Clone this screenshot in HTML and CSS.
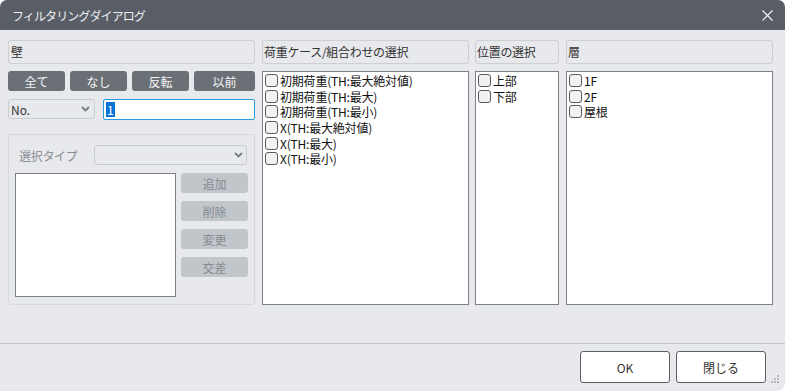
FILE: index.html
```html
<!DOCTYPE html>
<html lang="ja">
<head>
<meta charset="utf-8">
<title>フィルタリングダイアログ</title>
<link rel="stylesheet" href="styles.css">
</head>
<body>
<div class="dialog">
  <div class="titlebar">
    <span class="title">フィルタリングダイアログ</span>
    <svg class="close" width="11" height="11" viewBox="0 0 11 11"><path d="M0.5 0.5L10.5 10.5M10.5 0.5L0.5 10.5" stroke="#f2f2f2" stroke-width="1.1" fill="none"/></svg>
  </div>
  <div class="content">
    <div class="col col-wall">
      <div class="colhead">壁</div>
      <div class="btnrow">
        <button class="dbtn">全て</button>
        <button class="dbtn">なし</button>
        <button class="dbtn">反転</button>
        <button class="dbtn">以前</button>
      </div>
      <div class="inputrow">
        <div class="select sel-no"><span>No.</span><svg class="chev" width="9" height="6" viewBox="0 0 9 6"><path d="M1 1L4.5 4.5L8 1" stroke="#7a7d82" stroke-width="1.8" fill="none"/></svg></div>
        <div class="textinput"><span class="selected">1</span></div>
      </div>
      <div class="group">
        <div class="typerow">
          <span class="typelabel">選択タイプ</span>
          <div class="select sel-type"><svg class="chev" width="9" height="6" viewBox="0 0 9 6"><path d="M1 1L4.5 4.5L8 1" stroke="#7a7d82" stroke-width="1.8" fill="none"/></svg></div>
        </div>
        <div class="typebody">
          <div class="listbox small"></div>
          <div class="sidebtns">
            <button class="gbtn">追加</button>
            <button class="gbtn">削除</button>
            <button class="gbtn">変更</button>
            <button class="gbtn">交差</button>
          </div>
        </div>
      </div>
    </div>
    <div class="col col-case">
      <div class="colhead">荷重ケース/組合わせの選択</div>
      <div class="listbox">
        <label class="item"><span class="cb"></span>初期荷重(TH:最大絶対値)</label>
        <label class="item"><span class="cb"></span>初期荷重(TH:最大)</label>
        <label class="item"><span class="cb"></span>初期荷重(TH:最小)</label>
        <label class="item"><span class="cb"></span>X(TH:最大絶対値)</label>
        <label class="item"><span class="cb"></span>X(TH:最大)</label>
        <label class="item"><span class="cb"></span>X(TH:最小)</label>
      </div>
    </div>
    <div class="col col-pos">
      <div class="colhead">位置の選択</div>
      <div class="listbox">
        <label class="item"><span class="cb"></span>上部</label>
        <label class="item"><span class="cb"></span>下部</label>
      </div>
    </div>
    <div class="col col-floor">
      <div class="colhead">層</div>
      <div class="listbox">
        <label class="item"><span class="cb"></span>1F</label>
        <label class="item"><span class="cb"></span>2F</label>
        <label class="item"><span class="cb"></span>屋根</label>
      </div>
    </div>
  </div>
  <div class="footer">
    <button class="fbtn">OK</button>
    <button class="fbtn">閉じる</button>
    <svg class="grip" width="8" height="8" viewBox="0 0 8 8"><g fill="#b4b6ba"><rect x="6" y="0" width="2" height="2"/><rect x="3" y="3" width="2" height="2"/><rect x="6" y="3" width="2" height="2"/><rect x="0" y="6" width="2" height="2"/><rect x="3" y="6" width="2" height="2"/><rect x="6" y="6" width="2" height="2"/></g></svg>
  </div>
</div>
</body>
</html>
```
FILE: styles.css
```css
* { box-sizing: border-box; }
html, body { margin: 0; padding: 0; background: #ffffff; }
body {
  font-family: "Noto Sans CJK JP", "Noto Sans", sans-serif;
  font-size: 12px;
  color: #222;
}
.dialog {
  width: 785px;
  height: 391px;
  background: #e8e9ed;
  border-radius: 7px 7px 8px 0;
  overflow: hidden;
  display: flex;
  flex-direction: column;
}
.titlebar {
  height: 30px;
  flex: none;
  background: #595e66;
  display: flex;
  align-items: center;
  justify-content: space-between;
  padding: 0 12px 0 12px;
}
.title {
  color: #eceef0;
  font-size: 12px;
  letter-spacing: -0.9px;
}
.close { display: block; margin-right: 0; margin-top: 1px; }
.content {
  height: 313px;
  flex: none;
  display: flex;
  padding: 10px 12px 0 8px;
  align-items: flex-start;
}
.col { display: flex; flex-direction: column; }
.col-wall { width: 247px; margin-right: 7px; }
.col-case { width: 207px; margin-right: 6px; }
.col-pos { width: 84px; margin-right: 7px; }
.col-floor { width: 207px; }
.colhead {
  height: 24px;
  border: 1px solid #cdcfd3;
  border-radius: 3px;
  line-height: 21px;
  padding-left: 1px;
  color: #333;
  font-size: 12px;
  white-space: nowrap;
  letter-spacing: -0.3px;
}
.col-wall .colhead { padding-left: 2px; }
.listbox {
  margin-top: 7px;
  height: 234px;
  background: #fff;
  border: 1px solid #7d8085;
  padding: 1px 0 0 2px;
  display: flex;
  flex-direction: column;
}
.listbox.small {
  margin-top: 0;
  width: 161px;
  height: 124px;
}
.item {
  display: flex;
  align-items: center;
  height: 15.6px;
  line-height: 15px;
  flex: none;
  overflow: visible;
  color: #111;
  font-size: 12px;
  white-space: nowrap;
  letter-spacing: -0.2px;
}
.cb {
  width: 13px;
  height: 13px;
  border: 1px solid #555a60;
  border-radius: 3px;
  background: #f1f1f1;
  margin-right: 2px;
  flex: none;
}
.btnrow {
  margin-top: 7px;
  display: grid;
  grid-template-columns: 57px 57px 57px 61px;
  column-gap: 5px;
}
button {
  font-family: inherit;
  font-size: 12px;
  padding: 0;
  margin: 0;
}
.dbtn {
  height: 20px;
  border: none;
  border-radius: 3px;
  background: #6b7077;
  color: #f4f5f6;
}
.inputrow {
  margin-top: 8px;
  display: flex;
  gap: 8px;
}
.select {
  height: 20px;
  border: 1px solid #c9ccd1;
  border-radius: 3px;
  display: flex;
  align-items: center;
  justify-content: space-between;
  padding: 0 4px 0 2px;
}
.sel-no { width: 87px; color: #333; }
.chev { display: block; margin-left: auto; }
.textinput {
  width: 152px;
  height: 21px;
  background: #fff;
  border: 1px solid #2b9be0;
  border-radius: 2px;
  display: flex;
  align-items: center;
  padding-left: 2px;
}
.selected {
  background: #0a74d6;
  color: #fff;
  font-size: 12px;
  line-height: 15px;
  padding: 0 1px;
}
.group {
  margin-top: 14px;
  height: 171px;
  border: 1px solid #d6d8dc;
  border-radius: 3px;
  padding: 10px 6px 0 6px;
}
.typerow {
  display: flex;
  align-items: center;
  height: 20px;
}
.typelabel {
  color: #8a8d92;
  padding-left: 4px;
  width: 79px;
  letter-spacing: -0.3px;
}
.sel-type { width: 153px; padding-right: 3px; }
.typebody {
  margin-top: 8px;
  display: flex;
  gap: 5px;
}
.sidebtns {
  display: flex;
  flex-direction: column;
  gap: 8px;
}
.gbtn {
  width: 67px;
  height: 20px;
  border: none;
  border-radius: 3px;
  background: #c1c6cb;
  color: #868a90;
}
.footer {
  flex: none;
  height: 48px;
  border-top: 1px solid #c3c5c9;
  display: flex;
  align-items: flex-start;
  justify-content: flex-end;
  padding: 7px 0 0 0;
  position: relative;
}
.fbtn {
  width: 90px;
  height: 32px;
  background: #fff;
  border: 1px solid #5a5e64;
  border-radius: 3px;
  color: #333;
  font-size: 12px;
  margin-left: 6px;
}
.fbtn:last-of-type { margin-right: 19px; }
.grip {
  position: absolute;
  right: 6px;
  bottom: 8px;
}
```
